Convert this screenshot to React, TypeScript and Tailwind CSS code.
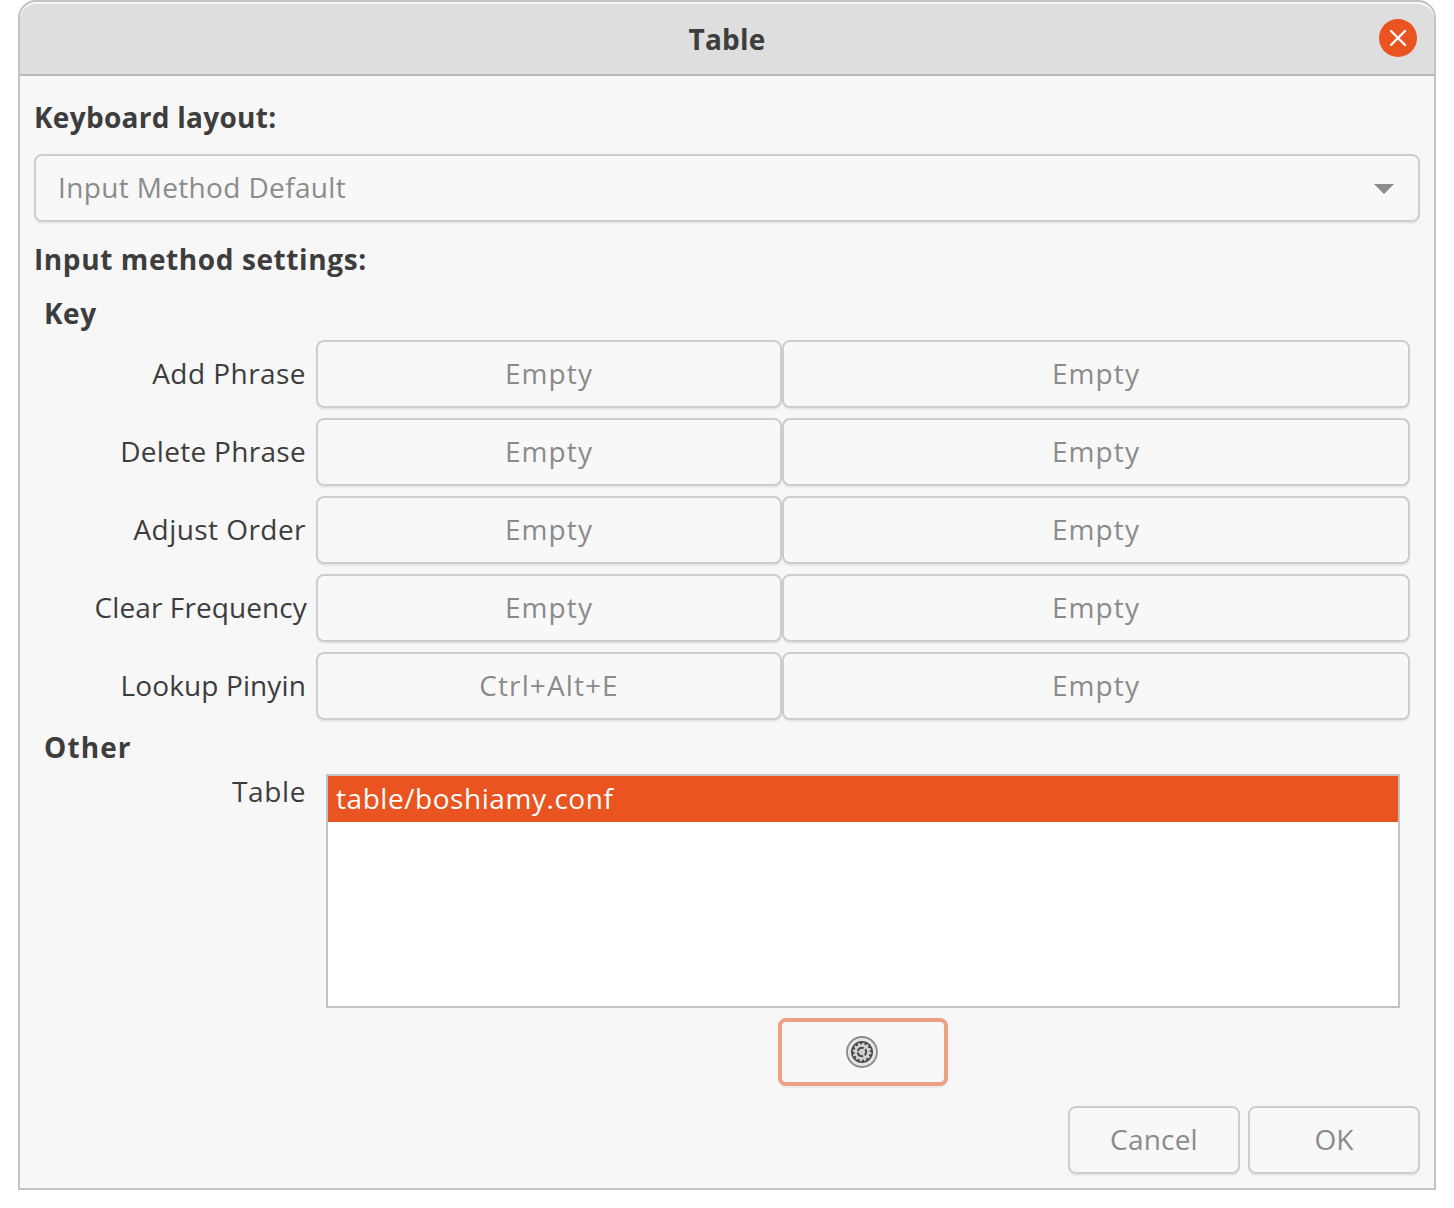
import type { ReactNode } from "react";

const button =
  "flex h-[68px] items-center justify-center rounded-lg border-2 border-[#cdcdcd] bg-[#f8f8f8] pb-0.5 text-[#8b8b8b] shadow-[0_2px_1px_rgba(0,0,0,0.06)]";

interface KeyRow {
  label: string;
  spacing: string;
  primary: string;
}

const rows: KeyRow[] = [
  { label: "Add Phrase", spacing: "tracking-[0.45px]", primary: "Empty" },
  { label: "Delete Phrase", spacing: "tracking-[0.3px]", primary: "Empty" },
  { label: "Adjust Order", spacing: "tracking-[0.45px]", primary: "Empty" },
  { label: "Clear Frequency", spacing: "-mr-px tracking-[0.1px]", primary: "Empty" },
  { label: "Lookup Pinyin", spacing: "tracking-[0.12px]", primary: "Ctrl+Alt+E" },
];

function Heading({ children, className }: { children: ReactNode; className: string }) {
  return <h2 className={`pb-0.5 leading-[38px] font-bold whitespace-nowrap ${className}`}>{children}</h2>;
}

function GearIcon() {
  return (
    <svg width="32" height="32" viewBox="0 0 32 32" fill="none">
      <circle cx="16" cy="16" r="15" fill="#e6e6e6" stroke="#8a8a8a" strokeWidth="1.8" />
      <circle cx="16" cy="16" r="11" fill="#4a4a4a" />
      <circle cx="16" cy="16" r="8.2" stroke="#d8d8d8" strokeWidth="2.2" strokeDasharray="2.147 2.147" />
      <circle cx="16" cy="16" r="6.4" stroke="#d4d4d4" strokeWidth="2.6" />
      <circle cx="16" cy="16" r="5.4" fill="#cfcfcf" />
      <circle cx="16" cy="16" r="4.2" stroke="#4a4a4a" strokeWidth="2" strokeDasharray="7.2 1.596" strokeDashoffset="3.6" />
    </svg>
  );
}

export default function App() {
  return (
    <div className="h-[1208px] bg-white font-['Open_Sans',sans-serif] text-[28px] leading-[40px] text-[#3d3d3d]">
      <main className="mx-[18px] flex h-[1190px] flex-col overflow-hidden rounded-t-[18px] border-2 border-[#c3c3c3] bg-[#f7f7f7]">
        <header className="grid h-[74px] shrink-0 grid-cols-[1fr_auto_1fr] items-center rounded-t-[16px] border-b-2 border-[#b8b8b8] bg-[#dedede] shadow-[inset_0_2px_0_#f8f8f8]">
          <span />
          <h1 className="pt-0.5 font-bold tracking-[0.2px]">Table</h1>
          <button className="mr-[17px] flex size-[38px] items-center justify-center justify-self-end rounded-full bg-[#e95420]" aria-label="Close">
            <svg width="18" height="18" viewBox="0 0 18 18" stroke="#fff" strokeWidth="2.4" strokeLinecap="round">
              <path d="M2 2 L16 16 M16 2 L2 16" />
            </svg>
          </button>
        </header>

        <div className="flex flex-col px-[14px] pt-[22px]">
          <Heading className="tracking-[0.28px]">Keyboard layout:</Heading>
          <button className="mt-4 flex h-[68px] items-center justify-between rounded-lg border-2 border-[#cdcdcd] bg-[#f8f8f8] pr-6 pl-[22px] text-[#8b8b8b] shadow-[0_2px_1px_rgba(0,0,0,0.06)]">
            <span className="pb-0.5 tracking-[0.35px]">Input Method Default</span>
            <svg width="20" height="10" viewBox="0 0 20 10" fill="#8b8b8b" className="mt-0.5">
              <path d="M0 0 H20 L10 10 Z" />
            </svg>
          </button>
          <Heading className="mt-[18px] tracking-[0.6px]">Input method settings:</Heading>

          <section className="mt-3.5 px-[10px]">
            <Heading className="tracking-[0.5px]">Key</Heading>
            <div className="mt-1.5 flex flex-col gap-2.5">
              {rows.map((row) => (
                <div key={row.label} className="grid grid-cols-[262px_466px_628px] items-center">
                  <span className={`justify-self-end pb-0.5 whitespace-nowrap ${row.spacing}`}>{row.label}</span>
                  <button className={`${button} -mr-2.5 ml-2.5 tracking-[1.1px]`}>{row.primary}</button>
                  <button className={`${button} -mr-2.5 ml-2.5 tracking-[1.1px]`}>Empty</button>
                </div>
              ))}
            </div>
          </section>

          <section className="mt-2 px-[10px]">
            <Heading className="tracking-[1.1px]">Other</Heading>
            <div className="mt-1.5 flex">
              <span className="w-[262px] text-right leading-[34px] tracking-[0.6px]">Table</span>
              <div className="ml-5 flex w-[1074px] flex-col items-center">
                <ul className="h-[234px] w-full border-2 border-[#c3c3c3] bg-white">
                  <li className="h-[46px] bg-[#e95420] pl-2 leading-[44px] tracking-[0.55px] text-white">table/boshiamy.conf</li>
                </ul>
                <button
                  className="mt-2.5 flex h-[68px] w-[170px] items-center justify-center rounded-lg border-4 border-[#ef9f84] bg-[#f8f8f8] pr-0.5 shadow-[0_2px_1px_rgba(0,0,0,0.05)]"
                  aria-label="Configure table"
                >
                  <GearIcon />
                </button>
              </div>
            </div>
          </section>

          <footer className="mt-5 flex justify-end gap-2">
            <button className={`${button} w-[172px] tracking-[0.2px]`}>Cancel</button>
            <button className={`${button} w-[172px]`}>OK</button>
          </footer>
        </div>
      </main>
    </div>
  );
}
